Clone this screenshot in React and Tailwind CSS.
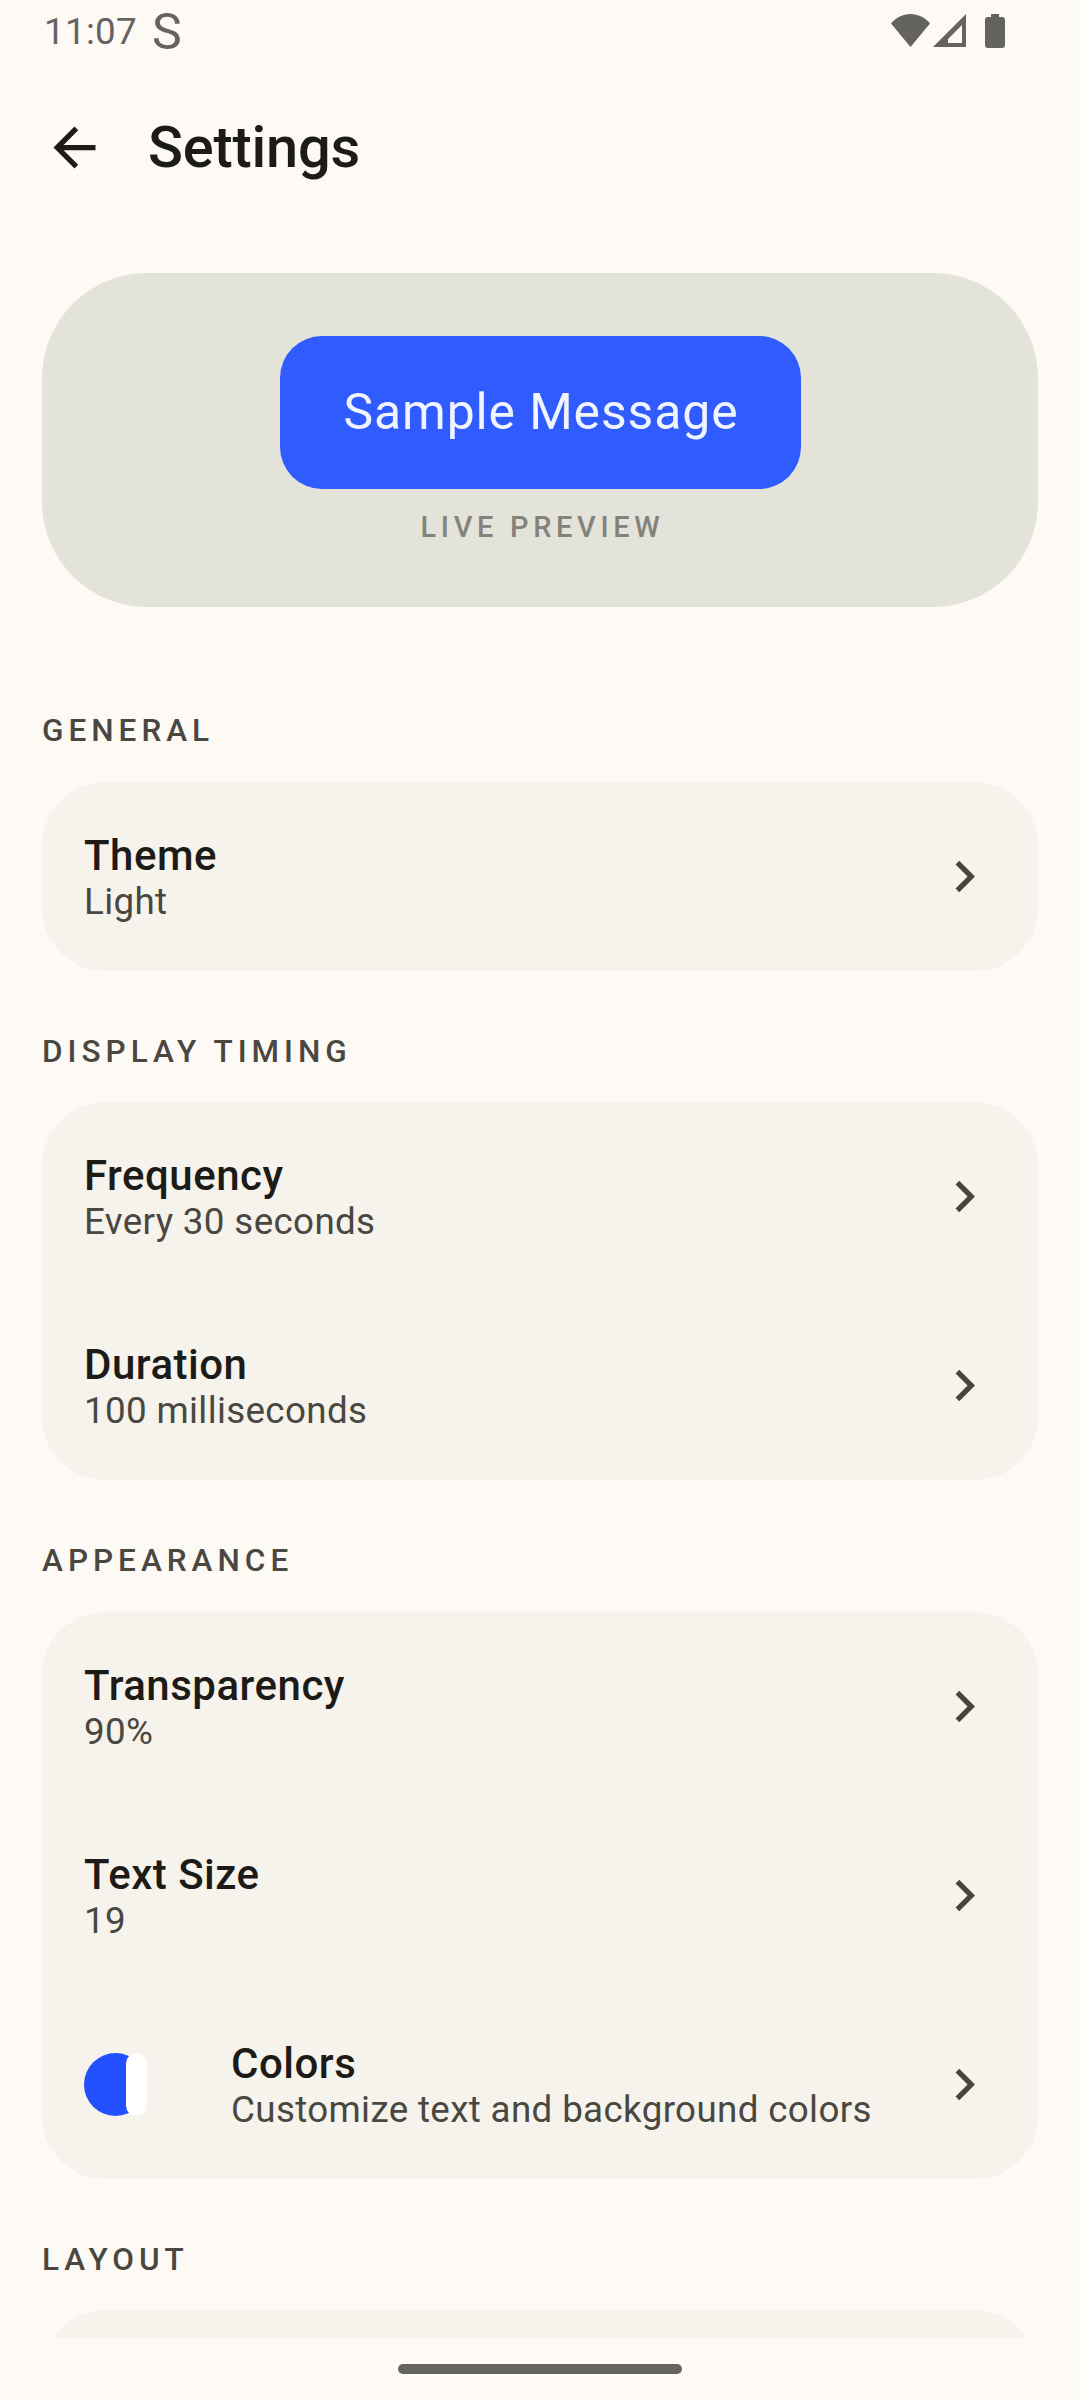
const font = { fontFamily: "Roboto, sans-serif" };

function Chevron() {
  return (
    <svg viewBox="0 0 24 24" className="w-[63px] h-[63px] shrink-0 fill-[#47443e]">
      <path d="M10 6L8.59 7.41 13.17 12l-4.58 4.59L10 18l6-6z" />
    </svg>
  );
}

function Row({ title, sub, icon }) {
  return (
    <div className="h-[189px] pl-[42px] pr-[42px] flex items-center">
      {icon && (
        <div className="relative w-[63px] h-[63px] mr-[84px] shrink-0">
          <div className="absolute inset-0 rounded-full bg-[#2350ff]" />
          <div className="absolute right-0 top-0 bottom-0 w-[21px] rounded-full bg-white" />
        </div>
      )}
      <div className="flex-1 flex flex-col pt-[1px]">
        <div className="text-[42px] leading-[50px] font-medium tracking-[0.5px] text-[#1d1b17]">{title}</div>
        <div className="text-[36.75px] leading-[42px] tracking-[0.35px] text-[#4a4740]">{sub}</div>
      </div>
      <Chevron />
    </div>
  );
}

function Section({ label, children }) {
  return (
    <>
      <div className="h-[131.5px] flex items-end pb-[32.5px] text-[31.5px] leading-[36px] font-medium tracking-[5px] text-[#4a4740]">
        {label}
      </div>
      <div className="rounded-[63px] bg-[#f6f3ed]">{children}</div>
    </>
  );
}

export default function App() {
  return (
    <div style={font} className="relative w-[1080px] h-[2400px] bg-[#fdfaf6] overflow-hidden flex flex-col">
      <div className="h-[63px] shrink-0 flex items-center pl-[44px] pr-[75px] text-[#65635f]">
        <span className="text-[36.75px] leading-[42px] tracking-[0.3px] mr-[15px]">11:07</span>
        <span className="text-[50px] leading-[50px]">S</span>
        <div className="flex-1" />
        <svg viewBox="0 0 39 33" className="w-[39px] h-[33px] mb-[2px] fill-[#65635f]">
          <path d="M0 9.5C5 3.5 12 0 19.5 0S34 3.5 39 9.5L19.5 33z" />
        </svg>
        <svg viewBox="0 0 33 33" className="w-[33px] h-[33px] mb-[2px] ml-[3px] fill-[#65635f]">
          <path fillRule="evenodd" d="M33 0v33H0zM29 11L15 25v4h14z" />
        </svg>
        <svg viewBox="0 0 20 34" className="w-[20px] h-[34px] mb-[2px] ml-[19px] fill-[#65635f]">
          <path d="M6 0h8v3h3a3 3 0 0 1 3 3v25a3 3 0 0 1-3 3H3a3 3 0 0 1-3-3V6a3 3 0 0 1 3-3h3z" />
        </svg>
      </div>
      <div className="h-[168px] shrink-0 flex items-center pl-[43px]">
        <svg viewBox="0 0 24 24" className="w-[63px] h-[63px] fill-[#1d1b17]">
          <path d="M20 11H7.83l5.59-5.59L12 4l-8 8 8 8 1.41-1.41L7.83 13H20v-2z" />
        </svg>
        <span className="ml-[42px] text-[57.75px] leading-[68px] font-medium tracking-[-0.2px] text-[#1d1b17]">Settings</span>
      </div>
      <div className="h-[2106px] shrink-0 overflow-hidden px-[42px] pt-[42px]">
        <div className="h-[334px] rounded-[105px] bg-[#e3e3da] flex flex-col items-center pt-[63px] mb-[43px]">
          <div className="w-[521px] h-[153px] rounded-[42px] bg-[#2f5bff] flex items-center justify-center pl-[2px] pb-[2px] text-[49.875px] leading-[58px] tracking-[0.9px] text-[#f0f4ff]">
            Sample Message
          </div>
          <div className="mt-[21px] pl-[5px] text-[28.9px] leading-[34px] font-medium tracking-[4.7px] text-[#83837c]">LIVE PREVIEW</div>
        </div>
        <Section label="GENERAL">
          <Row title="Theme" sub="Light" />
        </Section>
        <Section label="DISPLAY TIMING">
          <Row title="Frequency" sub="Every 30 seconds" />
          <Row title="Duration" sub="100 milliseconds" />
        </Section>
        <Section label="APPEARANCE">
          <Row title="Transparency" sub="90%" />
          <Row title="Text Size" sub="19" />
          <Row icon title="Colors" sub="Customize text and background colors" />
        </Section>
        <Section label="LAYOUT">
          <div className="h-[189px]" />
        </Section>
      </div>
      <div className="flex-1 flex justify-center pt-[27px]">
        <div className="w-[284px] h-[10px] rounded-full bg-[#65635f]" />
      </div>
    </div>
  );
}
